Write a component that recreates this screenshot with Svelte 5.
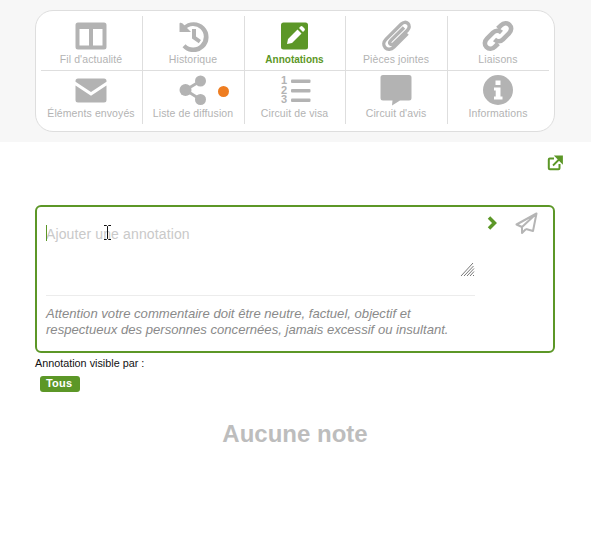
<script>
  const tabs = [
    { id: "fil", label: "Fil d'actualité" },
    { id: "history", label: "Historique" },
    { id: "notes", label: "Annotations", active: true },
    { id: "clip", label: "Pièces jointes" },
    { id: "link", label: "Liaisons" },
    { id: "mail", label: "Éléments envoyés" },
    { id: "share", label: "Liste de diffusion", dot: true },
    { id: "visa", label: "Circuit de visa" },
    { id: "avis", label: "Circuit d'avis" },
    { id: "info", label: "Informations" },
  ];
</script>

<div class="page">
  <header class="head">
    <nav class="card">
      <div class="grid">
        {#each tabs as tab, i}
          <button type="button" class="tab" class:active={tab.active} class:first-row={i < 5} class:last-col={i % 5 === 4}>
            <span class="icon">
              <svg viewBox="0 0 32 32" width="32" height="32" aria-hidden="true">
                {#if tab.id === "fil"}
                  <path fill-rule="evenodd" d="M3 2.500h26a2.500 2.500 0 0 1 2.500 2.500v22a2.500 2.500 0 0 1-2.500 2.500H3A2.500 2.500 0 0 1 .5 27V5A2.500 2.500 0 0 1 3 2.500zM4.500 9v16.500H14V9zM18 9v16.500h9.500V9z" />
                {:else if tab.id === "history"}
                  <path d="M5.300 3.200 14 12H2.500V3.800c0-.8 1-1.300 1.700-.7z" />
                  <path d="M6 6.500A15 15 0 1 1 5.500 27.300l3-3A10.700 10.700 0 1 0 8.300 9.500z" />
                  <path d="M15 9h4v7.500l5 3.500-2.200 3.200L15 18.500z" />
                {:else if tab.id === "notes"}
                  <rect x="2" y="2.500" width="27" height="27" rx="2.500" class="pad" />
                  <path class="pencil" d="M8 24l1-5 9.500-9.500 4 4L13 23zM20 8l1.500-1.500a1.500 1.500 0 0 1 2 0l2 2a1.500 1.500 0 0 1 0 2L24 12z" />
                {:else if tab.id === "clip"}
                  <path class="line clip" d="M26.500 12 13 25.500c-2.800 2.800-6.500 3-8.700.8s-2-5.900.8-8.700L20.300 2.500c2-2 4.800-2.300 6.700-.5s1.500 4.700-.5 6.700L13 22c-1.200 1.200-2.800 1.500-3.700.6s-.6-2.500.6-3.700L23 6" transform="translate(1 1.500)" />
                {:else if tab.id === "link"}
                  <path class="line thick" d="M12.500 19.500c2.800 2.500 6 2.300 8.500-.2l6-6c2.700-2.700 2.800-6.300.5-8.500s-5.800-2.200-8.500.5l-3.200 3.200" />
                  <path class="line thick" d="M19.500 12.500c-2.800-2.500-6-2.300-8.500.2l-6 6c-2.700 2.700-2.800 6.300-.5 8.500s5.800 2.200 8.500-.5l3.200-3.200" />
                {:else if tab.id === "mail"}
                  <path d="M3 4.500h26A2.500 2.500 0 0 1 31.500 7v.8L16 18 .5 7.800V7A2.500 2.500 0 0 1 3 4.500z" />
                  <path d="M.5 11.500 16 21.800l15.500-10.300V26a2.500 2.500 0 0 1-2.500 2.500H3A2.500 2.500 0 0 1 .5 26z" />
                {:else if tab.id === "share"}
                  <circle cx="8.500" cy="16" r="6" />
                  <circle cx="23.500" cy="7" r="5.500" />
                  <circle cx="23.500" cy="25.500" r="5.500" />
                  <path class="line thin" d="M8.500 16 23.500 7M8.500 16l15 9.500" />
                {:else if tab.id === "visa"}
                  <rect x="12" y="5.500" width="19.500" height="3.500" rx="1" />
                  <rect x="12" y="15" width="19.500" height="3.500" rx="1" />
                  <rect x="12" y="24.500" width="19.500" height="3.500" rx="1" />
                  <text x="5" y="10" class="num">1</text>
                  <text x="5" y="19.500" class="num">2</text>
                  <text x="5" y="29" class="num">3</text>
                {:else if tab.id === "avis"}
                  <path d="M3 1h26a2.500 2.500 0 0 1 2.500 2.500v20.500A2.500 2.500 0 0 1 29 26.500H20L12 31.500l.5-5H3A2.500 2.500 0 0 1 .5 24V3.500A2.500 2.500 0 0 1 3 1z" />
                {:else if tab.id === "info"}
                  <path fill-rule="evenodd" d="M16 1a15 15 0 1 1 0 30 15 15 0 0 1 0-30zM13.500 6.500v4.500h5V6.500zM12 13.500v3h1.700v6H12v3h8.500v-3h-2V13.500z" />
                {/if}
              </svg>
              {#if tab.dot}<span class="dot"></span>{/if}
            </span>
            <span class="label">{tab.label}</span>
          </button>
        {/each}
      </div>
    </nav>
  </header>

  <main class="body">
    <div class="open-row">
      <svg viewBox="0 0 16 16" width="16" height="16" aria-hidden="true" class="open">
        <path d="M7 3.500H2.800a1 1 0 0 0-1 1v8.700a1 1 0 0 0 1 1h8.700a1 1 0 0 0 1-1V9" fill="none" stroke="currentColor" stroke-width="2" />
        <path d="M6 10.500 13.500 3M9 1.500h6v6z" fill="currentColor" stroke="currentColor" stroke-width="1.800" />
      </svg>
    </div>

    <form class="composer">
      <div class="top">
        <div class="field">
          <textarea placeholder="Ajouter une annotation" rows="3" spellcheck="false"></textarea>
          <span class="caret"></span>
          <svg class="ibeam" viewBox="0 0 9 15" width="9" height="15" aria-hidden="true">
            <path d="M1 .5h2.500l1 1 1-1H8M4.500 1.500v12M1 14.500h2.500l1-1 1 1H8" fill="none" stroke="#111" />
          </svg>
          <svg class="grip" viewBox="0 0 15 15" width="15" height="15" aria-hidden="true">
            <path d="M1 14 13 1M4 14l9.500-10M7 14l7-7.500M10 14l4-4.500M13 14l1-1" fill="none" stroke="#777" />
          </svg>
        </div>
        <div class="actions">
          <svg class="chev" viewBox="0 0 10 14" width="10" height="14" aria-hidden="true">
            <path d="M2 1.500 7.500 7 2 12.500" fill="none" stroke="currentColor" stroke-width="3.500" />
          </svg>
          <svg class="plane" viewBox="0 0 23 23" width="23" height="23" aria-hidden="true">
            <path d="M21.500 1.500 1.500 12.500l5.500 2.500zM21.500 1.500 7 15v6l4-4M21.500 1.500 18 19l-7-2" fill="none" stroke="#b5b5b5" stroke-width="2" stroke-linejoin="round" />
          </svg>
        </div>
      </div>
      <p class="warning">Attention votre commentaire doit être neutre, factuel, objectif et respectueux des personnes concernées, jamais excessif ou insultant.</p>
    </form>

    <div class="visible">Annotation visible par :</div>
    <span class="tag">Tous</span>
    <h2 class="empty">Aucune note</h2>
  </main>
</div>

<style>
  :global(body) {
    background: #fff;
    font-family: "Liberation Sans", Arial, sans-serif;
  }

  .page {
    width: 591px;
    height: 552px;
    overflow: hidden;
  }

  .head {
    background: #f7f7f7;
    padding: 10px 36px 10px 35px;
  }

  .card {
    background: #fff;
    border: 1px solid #dedede;
    border-radius: 18px;
    padding: 5px 5px 6px;
    height: 122px;
    box-sizing: border-box;
  }

  .grid {
    display: grid;
    grid-template-columns: 102px 102px 101px 102px 1fr;
    grid-auto-rows: 54px;
    height: 109px;
  }

  .tab {
    all: unset;
    display: flex;
    flex-direction: column;
    align-items: center;
    padding-right: 1px;
    border-right: 1px solid #dedede;
    color: #b3b3b3;
    min-width: 0;
  }
  .tab.first-row {
    border-bottom: 1px solid #dedede;
    height: 55px;
    box-sizing: border-box;
  }
  .tab.last-col {
    border-right: 0;
  }

  .icon {
    position: relative;
    display: block;
    width: 32px;
    height: 32px;
    margin-top: 4px;
  }
  .icon svg {
    display: block;
    fill: currentColor;
  }
  .line {
    fill: none;
    stroke: currentColor;
    stroke-width: 3;
  }
  .clip {
    stroke-width: 3.400;
  }
  .thick {
    stroke-width: 4.600;
  }
  .thin {
    stroke-width: 2.800;
  }
  .num {
    font-family: "Liberation Sans", Arial, sans-serif;
    font-size: 11px;
    font-weight: 700;
    text-anchor: middle;
  }
  .pad {
    fill: #5c9727;
  }
  .pencil {
    fill: #fff;
  }

  .dot {
    position: absolute;
    left: 41px;
    top: 12px;
    width: 11px;
    height: 11px;
    border-radius: 50%;
    background: #ee7d21;
  }

  .label {
    margin-top: 1px;
    font-size: 10.500px;
    line-height: 13px;
    letter-spacing: 0.1px;
    color: #b3b3b3;
    white-space: nowrap;
  }
  .tab.active .label {
    color: #5c9727;
    font-size: 10px;
    font-weight: 700;
    letter-spacing: 0;
  }

  .body {
    padding: 0 36px 0 35px;
  }

  .open-row {
    display: flex;
    justify-content: flex-end;
    padding-top: 13px;
    margin-right: -8px;
    height: 50px;
    box-sizing: border-box;
  }
  .open {
    color: #5c9727;
  }

  .composer {
    border: 2px solid #5c9727;
    border-radius: 6px;
    height: 148px;
    box-sizing: border-box;
    margin: 13px 0 0;
    padding: 0 9px;
  }

  .top {
    display: flex;
    height: 88px;
  }

  .field {
    position: relative;
    width: 429px;
    height: 88px;
    border-bottom: 1px solid #ececec;
  }

  textarea {
    display: block;
    width: 100%;
    height: 100%;
    box-sizing: border-box;
    padding: 18px 0 0;
    border: 0;
    outline: 0;
    resize: none;
    background: transparent;
    font: 14px/18px "Liberation Sans", Arial, sans-serif;
    letter-spacing: 0.13px;
    caret-color: transparent;
  }
  textarea::placeholder {
    color: #c9c9c9;
    opacity: 1;
  }

  .caret {
    position: absolute;
    left: 0;
    top: 18px;
    width: 1px;
    height: 16px;
    background: #5c9727;
  }
  .ibeam {
    position: absolute;
    left: 57px;
    top: 18px;
  }
  .grip {
    position: absolute;
    right: 0;
    top: 55px;
  }

  .actions {
    display: flex;
    align-items: flex-start;
    gap: 18px;
    padding: 5px 0 0 12px;
  }
  .chev {
    color: #5c9727;
    margin-top: 4px;
  }

  .warning {
    margin: 11px 0 0;
    width: 415px;
    font-size: 13.100px;
    font-style: italic;
    line-height: 16px;
    color: #8a8a8a;
  }

  .visible {
    margin-top: 3px;
    font-size: 10.800px;
    line-height: 14px;
    color: #111;
  }

  .tag {
    display: inline-block;
    margin: 6px 0 0 5px;
    padding: 0 8px 0 6px;
    height: 16px;
    border-radius: 3px;
    background: #5c9727;
    color: #fff;
    font-size: 11px;
    font-weight: 700;
    line-height: 15px;
    letter-spacing: 0.2px;
  }

  .empty {
    margin: 28px 0 0;
    text-align: center;
    font-size: 24px;
    line-height: 28px;
    font-weight: 700;
    color: #bdbdbd;
  }
</style>
